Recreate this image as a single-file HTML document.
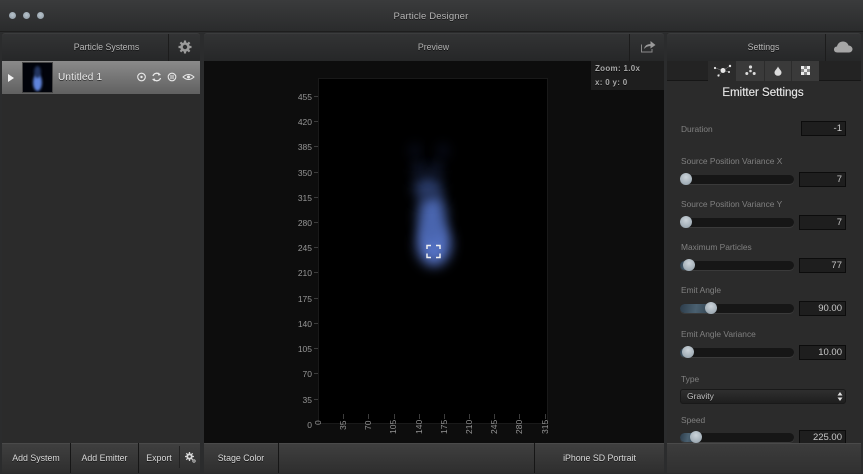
<!DOCTYPE html>
<html><head><meta charset="utf-8"><style>
html,body{margin:0;padding:0;width:863px;height:474px;overflow:hidden;background:#2b2c2d}
body{position:relative;font-family:"Liberation Sans",sans-serif;color:#c4c4c4;font-size:8.800px;filter:blur(.3px)}
div{position:absolute;box-sizing:border-box}
svg{position:absolute}
.t{white-space:nowrap;text-shadow:0 1px 0 rgba(0,0,0,.6)}
.hdr{background:linear-gradient(#323334,#262728);height:28px;top:33px;border-top:1px solid #3b3c3d;border-radius:3px 3px 0 0}
.bot{background:linear-gradient(#3f3f3f,#2e2e2e);height:30px;top:443px;border-top:1px solid #4a4a4a}
.sep{width:1px;background:#161616}
.lab{left:681px;color:#808080;font-size:8.400px;white-space:nowrap}
.track{left:679.500px;width:114.500px;height:9px;border-radius:5px;background:#161616;box-shadow:0 1px 0 #3a3a3a}
.fill{left:679.500px;height:9px;border-radius:5px 0 0 5px;background:linear-gradient(100deg,#2c3c4a,#4a6070 50%,#30414e)}
.th{width:12px;height:12px;border-radius:50%;background:radial-gradient(circle at 50% 35%,#ccd4da,#8e9ca6)}
.inp{left:799px;width:47px;height:15px;background:#1e1e1e;border:1px solid #0c0c0c;color:#c8c8c8;font-size:9.500px;text-align:right;padding-right:3px;line-height:13px}
.y{right:0;width:20px;text-align:right;color:#969696;font-size:8.500px;line-height:10px}
.tk{background:#3c3c3c}
.x{color:#969696;font-size:8.500px;line-height:10px;white-space:nowrap;transform:rotate(-90deg);transform-origin:0 0}
.dot{width:7px;height:7px;border-radius:50%;top:12px;background:radial-gradient(circle at 50% 40%,#b8c4cc,#8a96a0)}
.b{filter:blur(6px);background:#5d7fd0;border-radius:50%}
</style></head><body>

<!-- title bar -->
<div style="left:0;top:0;width:863px;height:32px;background:linear-gradient(#3a3b3c,#2a2b2c);border-bottom:1px solid #1e1e1e"></div>
<div class="dot" style="left:9px"></div><div class="dot" style="left:23px"></div><div class="dot" style="left:37px"></div>
<div class="t" style="left:331px;width:200px;top:11px;text-align:center;font-size:9.500px;color:#b4b4b4;letter-spacing:.15px">Particle Designer</div>

<!-- left panel -->
<div style="left:2px;top:33px;width:198px;height:440px;background:#2b2b2b"></div>
<div class="hdr" style="left:2px;width:198px"></div>
<div class="sep" style="left:168px;top:34px;height:27px;background:#1c1c1c"></div>
<div class="t" style="left:3px;width:207px;top:42px;text-align:center;color:#b8b8b8">Particle Systems</div>
<svg style="left:178px;top:40px" width="14" height="14" viewBox="0 0 14 14"><circle cx="7" cy="7" r="3.500" fill="none" stroke="#9a9a9a" stroke-width="2.600"/><path d="M7 .5V3M7 11v2.500M.5 7H3M11 7h2.500M2.400 2.400l1.800 1.800M9.800 9.800l1.800 1.800M11.600 2.400L9.800 4.200M4.200 9.800l-1.800 1.800" stroke="#9a9a9a" stroke-width="2.200"/></svg>
<div style="left:2px;top:61px;width:198px;height:33px;background:linear-gradient(#8a8a8a,#606060)"></div>
<svg style="left:8px;top:74px" width="7" height="8"><path d="M0 0L6 4L0 8Z" fill="#f2f2f2"/></svg>
<div style="left:22px;top:62px;width:31px;height:31px;background:#01030a;border:1px solid #444;overflow:hidden">
 <div style="left:10px;top:11px;width:9px;height:17px;border-radius:50%;background:#5f84dc;filter:blur(1.200px)"></div>
 <div style="left:11px;top:3px;width:7px;height:12px;border-radius:50%;background:#22345f;filter:blur(1.200px)"></div>
</div>
<div class="t" style="left:58px;top:72px;font-size:10px;color:#ececec;letter-spacing:.2px">Untitled 1</div>
<svg style="left:136px;top:71px" width="60" height="12" fill="none" stroke="#e8e8e8">
 <circle cx="5.500" cy="6" r="3.800" stroke-width="1.100"/><circle cx="5.500" cy="6" r="1.200" fill="#e8e8e8" stroke="none"/>
 <path d="M17 5a3.800 3.800 0 0 1 6.500-1.500M24.500 7a3.800 3.800 0 0 1-6.500 1.500" stroke-width="1.300"/><path d="M22.500 1.500l2.500 2.500-3 .5zM18.500 10.500l-2.500-2.500 3-.5z" fill="#e8e8e8" stroke="none"/>
 <circle cx="36" cy="6" r="3.800" stroke-width="1.100"/><path d="M35 4v4M37 4v4" stroke-width="1"/>
 <path d="M47 6q5.500-5 11 0q-5.500 5-11 0z" stroke-width="1"/><circle cx="52.500" cy="6" r="1.500" fill="#e8e8e8" stroke="none"/>
</svg>

<div class="bot" style="left:2px;width:198px"></div>
<div class="sep" style="left:70px;top:443px;height:30px"></div>
<div class="sep" style="left:138px;top:443px;height:30px"></div>
<div class="sep" style="left:179px;top:446px;height:22px;background:#222"></div>
<div class="t" style="left:2px;width:68px;top:453px;text-align:center;color:#dadada">Add System</div>
<div class="t" style="left:71px;width:67px;top:453px;text-align:center;color:#dadada">Add Emitter</div>
<div class="t" style="left:139px;width:40px;top:453px;text-align:center;color:#dadada">Export</div>
<svg style="left:185px;top:452px" width="11" height="11" viewBox="0 0 11 11"><circle cx="4.500" cy="4.500" r="2.200" fill="none" stroke="#d8d8d8" stroke-width="1.800"/><path d="M4.500 0v2M4.500 7v2M0 4.500h2M7 4.500h2M1.300 1.300l1.400 1.400M6.300 6.300l1.400 1.400M7.700 1.300L6.300 2.700M2.700 6.300L1.300 7.700" stroke="#d8d8d8" stroke-width="1.300"/><circle cx="9" cy="9" r="1.200" fill="none" stroke="#d8d8d8" stroke-width=".8"/></svg>

<!-- middle panel -->
<div style="left:204px;top:61px;width:460px;height:382px;background:#0d0d0d"></div>
<div class="hdr" style="left:204px;width:460px"></div>
<div class="sep" style="left:629px;top:34px;height:27px;background:#1c1c1c"></div>
<div class="t" style="left:204px;width:459px;top:42px;text-align:center;color:#b0b0b0">Preview</div>
<svg style="left:640px;top:40px" width="16" height="13" viewBox="0 0 16 13"><path d="M1.500 4.500v7.500h10.500v-3" fill="none" stroke="#8a8a8a" stroke-width="1"/><path d="M4 9q1-5 6.500-5V1L15.500 5L10.500 8.500V6Q6.500 6 4 9z" fill="#9a9a9a"/></svg>

<div style="left:318px;top:78px;width:230px;height:346px;background:#000;border:1px solid #191919;overflow:hidden"></div>
<div style="left:591px;top:61px;width:73px;height:29px;background:#1e1e1e"></div>
<div class="t" style="left:595px;top:64px;font-size:8px;font-weight:bold;color:#a8a8a8;letter-spacing:.3px">Zoom: 1.0x</div>
<div class="t" style="left:595px;top:78px;font-size:8px;font-weight:bold;color:#a8a8a8;letter-spacing:.3px">x: 0 y: 0</div>

<!-- flame -->
<div style="left:380px;top:130px;width:110px;height:150px;overflow:hidden">
 <div class="b" style="left:37px;top:92px;width:34px;height:44px;background:#5572c4"></div>
 <div class="b" style="left:38px;top:62px;width:28px;height:52px;background:#4a66b0"></div>
 <div class="b" style="left:34px;top:46px;width:28px;height:24px;background:#2a3b68"></div>
 <div class="b" style="left:33px;top:32px;width:12px;height:14px;background:#161f3a"></div>
 <div class="b" style="left:50px;top:32px;width:12px;height:14px;background:#161f3a"></div>
 <div class="b" style="left:30px;top:14px;width:10px;height:14px;background:#0a0f22"></div>
 <div class="b" style="left:58px;top:14px;width:10px;height:14px;background:#0a0f22"></div>
</div>
<svg style="left:426px;top:244px" width="15" height="15" fill="none" stroke="#f0f0f0" stroke-width="1.500"><path d="M1 5V1.500H5M10 1.500h4V5M1 9.500v4h4M14 9.500v4h-4"/></svg>

<!-- y axis -->
<div class="y" style="left:292px;top:92px">455</div><div class="tk" style="left:314px;top:96px;width:4px;height:1px"></div>
<div class="y" style="left:292px;top:117px">420</div><div class="tk" style="left:314px;top:121px;width:4px;height:1px"></div>
<div class="y" style="left:292px;top:142px">385</div><div class="tk" style="left:314px;top:146px;width:4px;height:1px"></div>
<div class="y" style="left:292px;top:168px">350</div><div class="tk" style="left:314px;top:172px;width:4px;height:1px"></div>
<div class="y" style="left:292px;top:193px">315</div><div class="tk" style="left:314px;top:197px;width:4px;height:1px"></div>
<div class="y" style="left:292px;top:218px">280</div><div class="tk" style="left:314px;top:222px;width:4px;height:1px"></div>
<div class="y" style="left:292px;top:243px">245</div><div class="tk" style="left:314px;top:247px;width:4px;height:1px"></div>
<div class="y" style="left:292px;top:268px">210</div><div class="tk" style="left:314px;top:272px;width:4px;height:1px"></div>
<div class="y" style="left:292px;top:294px">175</div><div class="tk" style="left:314px;top:298px;width:4px;height:1px"></div>
<div class="y" style="left:292px;top:319px">140</div><div class="tk" style="left:314px;top:323px;width:4px;height:1px"></div>
<div class="y" style="left:292px;top:344px">105</div><div class="tk" style="left:314px;top:348px;width:4px;height:1px"></div>
<div class="y" style="left:292px;top:369px">70</div><div class="tk" style="left:314px;top:373px;width:4px;height:1px"></div>
<div class="y" style="left:292px;top:395px">35</div><div class="tk" style="left:314px;top:399px;width:4px;height:1px"></div>
<div class="y" style="left:292px;top:420px">0</div>

<!-- x axis -->
<div class="x" style="left:313px;top:425px">0</div>
<div class="x" style="left:338px;top:430px">35</div><div class="tk" style="left:343px;top:414px;width:1px;height:5px"></div>
<div class="x" style="left:363px;top:430px">70</div><div class="tk" style="left:368px;top:414px;width:1px;height:5px"></div>
<div class="x" style="left:388px;top:434px">105</div><div class="tk" style="left:394px;top:414px;width:1px;height:5px"></div>
<div class="x" style="left:414px;top:434px">140</div><div class="tk" style="left:419px;top:414px;width:1px;height:5px"></div>
<div class="x" style="left:439px;top:434px">175</div><div class="tk" style="left:444px;top:414px;width:1px;height:5px"></div>
<div class="x" style="left:464px;top:434px">210</div><div class="tk" style="left:469px;top:414px;width:1px;height:5px"></div>
<div class="x" style="left:489px;top:434px">245</div><div class="tk" style="left:494px;top:414px;width:1px;height:5px"></div>
<div class="x" style="left:514px;top:434px">280</div><div class="tk" style="left:519px;top:414px;width:1px;height:5px"></div>
<div class="x" style="left:540px;top:434px">315</div><div class="tk" style="left:545px;top:414px;width:1px;height:5px"></div>

<div class="bot" style="left:204px;width:460px"></div>
<div class="sep" style="left:278px;top:443px;height:30px"></div>
<div class="sep" style="left:534px;top:443px;height:30px"></div>
<div class="t" style="left:204px;width:74px;top:453px;text-align:center;color:#dadada">Stage Color</div>
<div class="t" style="left:535px;width:129px;top:453px;text-align:center;color:#dadada">iPhone SD Portrait</div>

<!-- right panel -->
<div style="left:667px;top:33px;width:194px;height:440px;background:#2b2b2b"></div>
<div class="hdr" style="left:667px;width:194px"></div>
<div class="sep" style="left:825px;top:34px;height:27px;background:#1c1c1c"></div>
<div class="t" style="left:667px;width:193px;top:42px;text-align:center;color:#b8b8b8">Settings</div>
<svg style="left:834px;top:41px" width="19" height="12" viewBox="0 0 19 12"><path d="M3.500 11.500C1 11.500 0 10 0 8.500C0 6.500 1.500 5.500 3 5.500C3.500 2.500 6 .5 9 .5C12 .5 14 2.500 14.500 4.500C17 4.500 18.500 6.500 18.500 8C18.500 10 17 11.500 15 11.500Z" fill="#a6a6a6"/></svg>

<div style="left:667px;top:61px;width:194px;height:20px;background:#232323;border-bottom:1px solid #161616"></div>
<div style="left:708px;top:61px;width:111px;height:20px;background:#3a3a3a"></div>
<div style="left:708px;top:61px;width:28px;height:21px;background:#2b2b2b"></div>
<div class="sep" style="left:764px;top:61px;height:20px;background:#2c2c2c"></div>
<div class="sep" style="left:791px;top:61px;height:20px;background:#2c2c2c"></div>
<svg style="left:712px;top:63px" width="22" height="16"><path d="M3 5L11 7.500L18 3M11 7.500L17 9M11 7.500L6.500 12.500" stroke="#888" stroke-width=".5" fill="none"/><g fill="#e6e6e6"><circle cx="11" cy="7.500" r="2.500"/><circle cx="3" cy="5" r="1.100"/><circle cx="18" cy="3" r="1.200"/><circle cx="17" cy="9" r="1"/><circle cx="6.500" cy="12.500" r="1.100"/></g></svg>
<svg style="left:745px;top:65px" width="11" height="11" fill="#dcdcdc"><circle cx="5.500" cy="2" r="1.600"/><circle cx="1.800" cy="8.500" r="1.500"/><circle cx="9.200" cy="8.500" r="1.500"/><circle cx="5.500" cy="6" r="1.300"/></svg>
<svg style="left:774px;top:66px" width="8" height="10"><path d="M4 .5C5 3 7.500 4.500 7.500 6.500A3.500 3.300 0 0 1 .5 6.500C.5 4.500 3 3 4 .5Z" fill="#dcdcdc"/></svg>
<svg style="left:801px;top:66px" width="10" height="10"><rect width="9" height="9" fill="#888"/><path d="M0 0h3v3H0zM6 0h3v3H6zM3 3h3v3H3zM0 6h3v3H0zM6 6h3v3H6z" fill="#ececec"/></svg>

<div class="t" style="left:666px;width:194px;top:87px;text-align:center;font-size:11.500px;color:#e4e4e4;-webkit-text-stroke:.2px #e4e4e4">Emitter Settings</div>

<div class="lab" style="top:124px">Duration</div>
<div class="inp" style="top:121px;left:801px;width:45px">-1</div>

<div class="lab" style="top:156px">Source Position Variance X</div>
<div class="track" style="top:175px"></div><div class="th" style="left:679.500px;top:173px"></div><div class="inp" style="top:172px">7</div>

<div class="lab" style="top:199px">Source Position Variance Y</div>
<div class="track" style="top:218px"></div><div class="th" style="left:679.500px;top:216px"></div><div class="inp" style="top:215px">7</div>

<div class="lab" style="top:242px">Maximum Particles</div>
<div class="track" style="top:261px"></div><div class="fill" style="top:261px;width:10px"></div><div class="th" style="left:683px;top:259px"></div><div class="inp" style="top:258px">77</div>

<div class="lab" style="top:285px">Emit Angle</div>
<div class="track" style="top:304px"></div><div class="fill" style="top:304px;width:32px"></div><div class="th" style="left:705px;top:302px"></div><div class="inp" style="top:301px">90.00</div>

<div class="lab" style="top:329px">Emit Angle Variance</div>
<div class="track" style="top:347.500px"></div><div class="fill" style="top:347.500px;width:9px"></div><div class="th" style="left:682px;top:346px"></div><div class="inp" style="top:344.500px">10.00</div>

<div class="lab" style="top:374px">Type</div>
<div style="left:680px;top:389px;width:166px;height:15px;border-radius:3px;background:linear-gradient(#2f2f2f,#1e1e1e);border:1px solid #191919"></div>
<div class="t" style="left:687px;top:391px;font-size:8.500px;color:#c0c0c0">Gravity</div>
<svg style="left:837px;top:392px" width="6" height="9"><path d="M3 0L5.500 3.500H.5ZM3 9L.5 5.500H5.500Z" fill="#e0e0e0"/></svg>

<div class="lab" style="top:415px">Speed</div>
<div class="track" style="top:433px"></div><div class="fill" style="top:433px;width:16px"></div><div class="th" style="left:690px;top:431px"></div><div class="inp" style="top:430px">225.00</div>

<div class="bot" style="left:667px;width:194px;background:linear-gradient(#3c3c3c,#303030)"></div>
</body></html>
